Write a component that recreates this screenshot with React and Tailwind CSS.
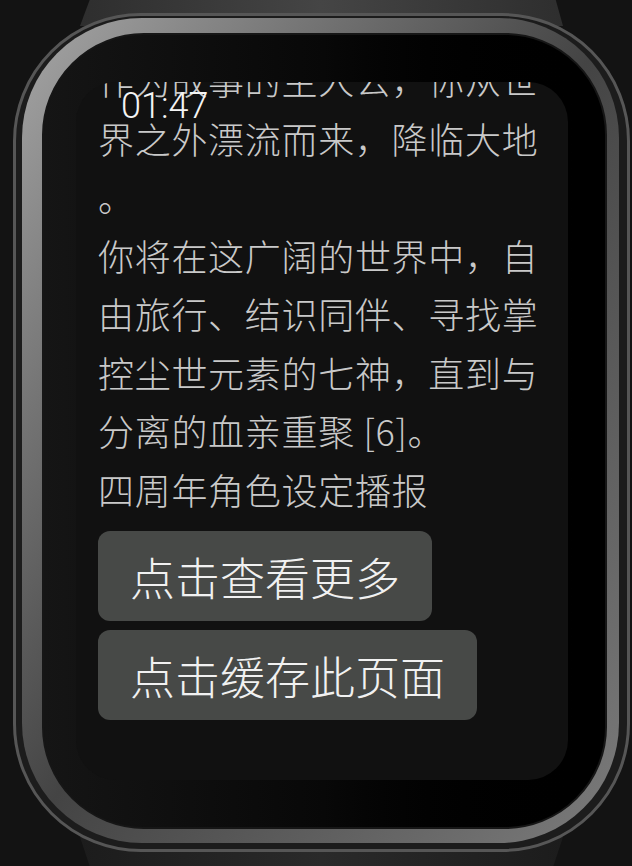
import React from "react";

const storyLines = [
  "作为故事的主人公，你从世",
  "界之外漂流而来，降临大地",
  "。",
  "你将在这广阔的世界中，自",
  "由旅行、结识同伴、寻找掌",
  "控尘世元素的七神，直到与",
  "分离的血亲重聚 [6]。",
  "四周年角色设定播报",
];

const actions = ["点击查看更多", "点击缓存此页面"];

const cjk = { fontFamily: '"Noto Sans CJK SC", "Noto Sans", sans-serif' };

const App = () => {
  return (
    <div className="w-[632px] h-[866px] overflow-hidden bg-[#131313] flex flex-col items-center pl-[11px]">
      {/* top strap */}
      <div className="w-[483px] h-[26px] shrink-0 bg-gradient-to-r from-[#2e2e2e] via-[#454545] to-[#2e2e2e] [clip-path:polygon(2%_0,98.5%_0,100%_100%,0_100%)]" />

      {/* case */}
      <div className="relative z-10 -mt-[13px] w-[617px] h-[839px] shrink-0 rounded-[128px] border-[3px] border-[#565656] bg-[#1c1c1c] pl-[6px] pr-[8px] pt-[2px] pb-[6px] flex">
        <div className="flex-1 flex rounded-[120px] bg-gradient-to-br from-[#a6a6a6] via-[#444] to-[#7c7c7c] pl-[20px] pr-[12px] pt-[15px] pb-[14px]">
          <div className="flex-1 flex rounded-[102px] border-[2px] border-[#161616] bg-gradient-to-r from-[#151515] via-[#080808] to-black pl-[32px] pr-[37px] pt-[47px] pb-[47px]">
            {/* screen content */}
            <div className="relative flex-1 rounded-[40px] overflow-hidden bg-[#111111]">
              <div className="-mt-[32px] pl-[22px] text-[36px] font-light tracking-[0.7px] leading-[58.5px] text-[#c9c9c9]" style={cjk}>
                {storyLines.map((line, index) => (
                  <div key={index} className="whitespace-nowrap">
                    {line}
                  </div>
                ))}

                <div className="mt-[13px] flex flex-col items-start gap-[9px]">
                  {actions.map((label) => (
                    <button
                      key={label}
                      className="h-[90px] px-8 rounded-xl bg-[#474947] text-[45px] font-light tracking-normal leading-none text-[#f1f1f1] flex items-center whitespace-nowrap"
                      style={cjk}
                    >
                      {label}
                    </button>
                  ))}
                </div>
              </div>

              {/* status time */}
              <div
                className="absolute left-[45px] top-[3px] text-[36px] font-light leading-[42px] text-[#f4f4f4]"
                style={{ fontFamily: 'Roboto, "Liberation Sans", sans-serif' }}
              >
                01:47
              </div>
            </div>
          </div>
        </div>
      </div>

      {/* bottom strap */}
      <div className="-mt-[15px] w-[483px] h-[29px] shrink-0 bg-gradient-to-r from-[#1c1c1c] via-[#2a2a2a] to-[#1c1c1c] [clip-path:polygon(0_0,100%_0,98%_100%,2%_100%)]" />
    </div>
  );
};

export default App;
